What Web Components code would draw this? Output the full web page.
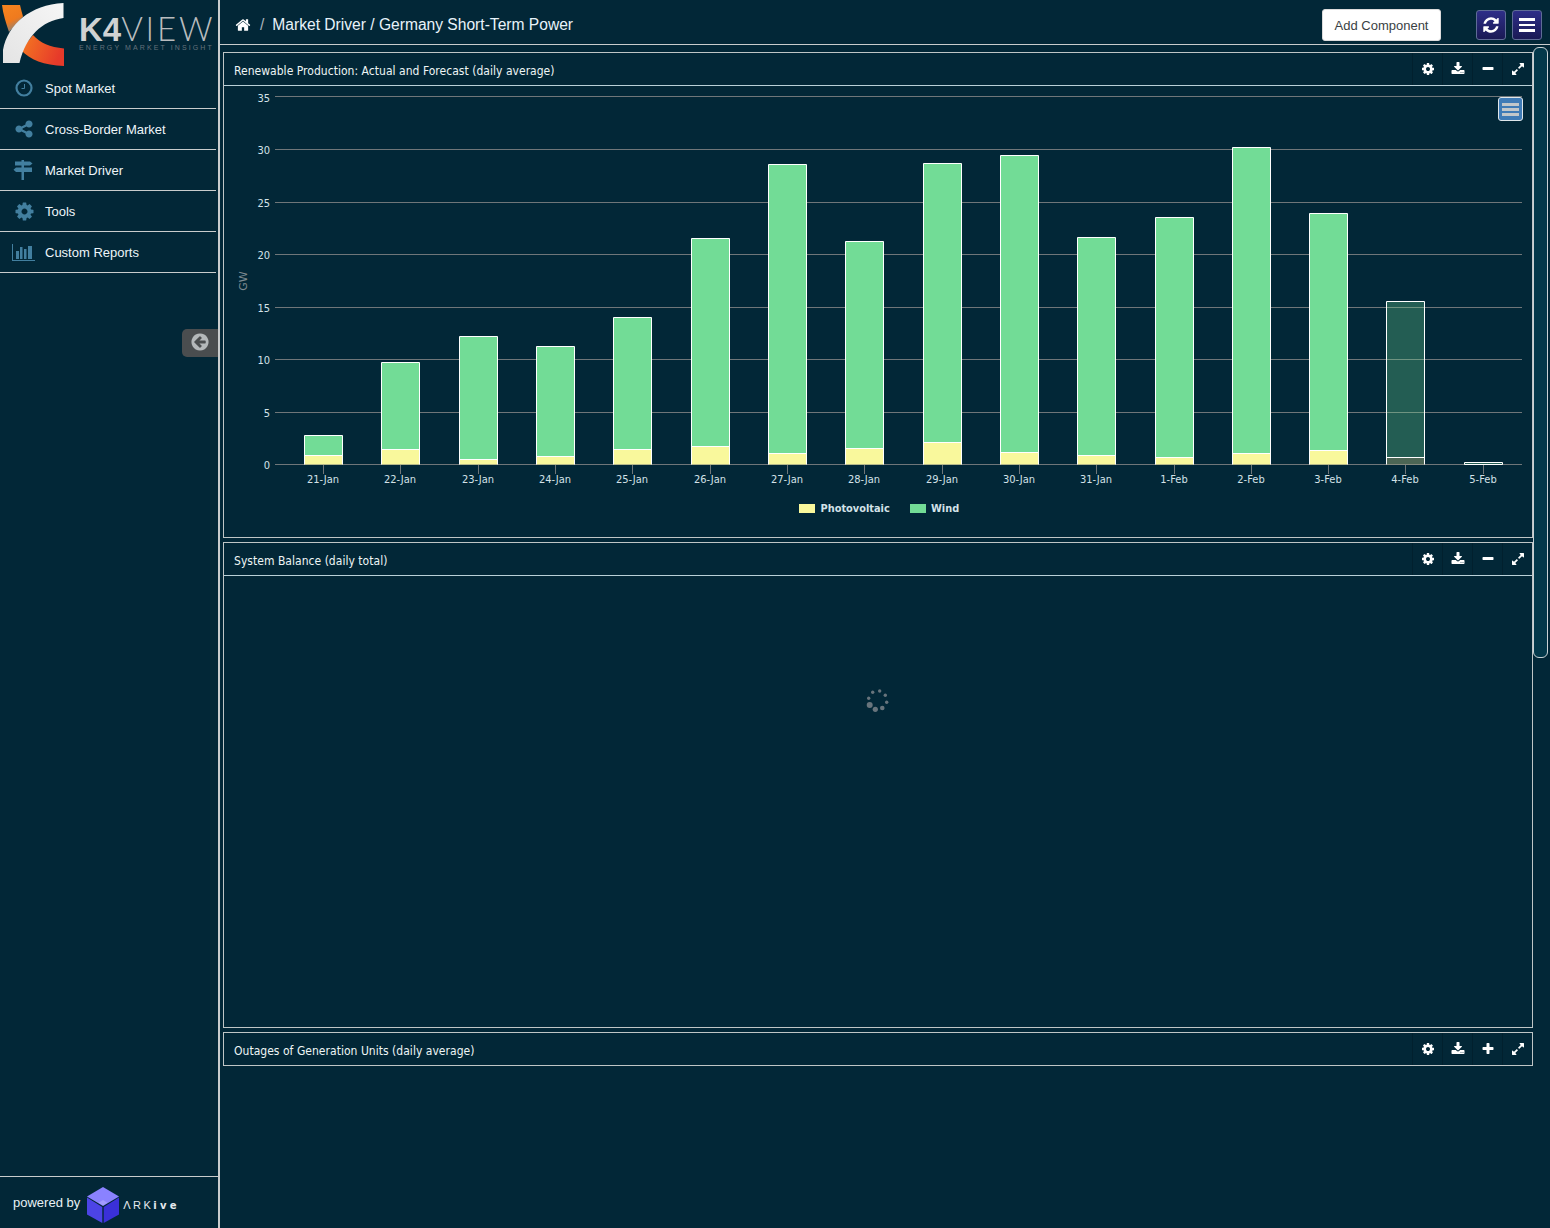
<!DOCTYPE html>
<html>
<head>
<meta charset="utf-8">
<title>K4View</title>
<style>
  html, body { margin: 0; height: 100%; background: #022737; overflow: hidden; }
  body {
    display: flex;
    height: 1228px;
    font-family: "Liberation Sans", Arial, sans-serif;
    color: #fff;
  }
</style>
</head>
<body>
<k4-sidebar>
  <k4-nav-item icon="clock">Spot Market</k4-nav-item>
  <k4-nav-item icon="share">Cross-Border Market</k4-nav-item>
  <k4-nav-item icon="signs">Market Driver</k4-nav-item>
  <k4-nav-item icon="cog">Tools</k4-nav-item>
  <k4-nav-item icon="bars">Custom Reports</k4-nav-item>
</k4-sidebar>
<k4-main>
  <k4-topbar slot="top">Market Driver / Germany Short-Term Power</k4-topbar>
  <k4-panel title="Renewable Production: Actual and Forecast (daily average)"><k4-chart></k4-chart></k4-panel>
  <k4-panel title="System Balance (daily total)"><k4-spinner></k4-spinner></k4-panel>
  <k4-panel title="Outages of Generation Units (daily average)" collapsed></k4-panel>
</k4-main>

<script>
  const FA = {
    cog: 'M1152 896q0-106-75-181t-181-75-181 75-75 181 75 181 181 75 181-75 75-181zm512-109v222q0 12-8 23t-20 13l-185 28q-19 54-39 91 35 50 107 138 10 12 10 25t-9 23q-27 37-99 108t-94 71q-12 0-26-9l-138-108q-44 23-91 38-16 136-29 186-7 28-36 28h-222q-14 0-24.500-8.500t-11.500-21.500l-28-184q-49-16-90-37l-141 107q-10 9-25 9-14 0-25-11-126-114-165-168-7-10-7-23 0-12 8-23 15-21 51-66.500t54-70.500q-27-50-41-99l-183-27q-13-2-21-12.500t-8-23.500v-222q0-12 8-23t19-13l186-28q14-46 39-92-40-57-107-138-10-12-10-24 0-10 9-23 26-36 98.500-107.500t94.500-71.500q13 0 26 10l138 107q44-23 91-38 16-136 29-186 7-28 36-28h222q14 0 24.500 8.500t11.500 21.500l28 184q49 16 90 37l142-107q9-9 24-9 13 0 25 10 129 119 165 170 7 8 7 22 0 12-8 23-15 21-51 66.500t-54 70.500q26 50 41 98l183 28q13 2 21 12.500t8 23.500z',
    home: 'M1472 992v480q0 26-19 45t-45 19h-384v-384h-256v384h-384q-26 0-45-19t-19-45v-480q0-1 .5-3t.5-3l575-474 575 474q1 2 1 6zm223-69l-62 74q-8 9-21 11h-3q-13 0-21-7l-692-577-692 577q-12 8-24 7-13-2-21-11l-62-74q-8-10-7-23.500t11-21.500l719-599q32-26 76-26t76 26l244 204v-195q0-14 9-23t23-9h192q14 0 23 9t9 23v408l219 182q10 8 11 21.500t-7 23.500z',
    refresh: 'M1639 1056q0 5-1 7-64 268-268 434.500t-478 166.500q-146 0-282.500-55t-243.500-157l-129 129q-19 19-45 19t-45-19-19-45v-448q0-26 19-45t45-19h448q26 0 45 19t19 45-19 45l-137 137q71 66 161 102t187 36q134 0 250-65t186-179q11-17 53-117 8-23 30-23h192q13 0 22.500 9.500t9.500 22.500zm25-800v448q0 26-19 45t-45 19h-448q-26 0-45-19t-19-45 19-45l138-138q-148-137-349-137-134 0-250 65t-186 179q-11 17-53 117-8 23-30 23h-199q-13 0-22.500-9.500t-9.500-22.500v-7q65-268 270-434.500t480-166.500q146 0 284 55.500t245 156.500l130-129q19-19 45-19t45 19 19 45z',
    download: 'M1344 1344q0-26-19-45t-45-19-45 19-19 45 19 45 45 19 45-19 19-45zm256 0q0-26-19-45t-45-19-45 19-19 45 19 45 45 19 45-19 19-45zm128-224v320q0 40-28 68t-68 28h-1472q-40 0-68-28t-28-68v-320q0-40 28-68t68-28h465l135 136q58 56 136 56t136-56l136-136h464q40 0 68 28t28 68zm-325-569q17 41-14 70l-448 448q-18 19-45 19t-45-19l-448-448q-31-29-14-70 17-39 59-39h256v-448q0-26 19-45t45-19h256q26 0 45 19t19 45v448h256q42 0 59 39z',
    expand: 'M883 1056q0 13-10 23l-332 332 144 144q19 19 19 45t-19 45-45 19h-448q-26 0-45-19t-19-45v-448q0-26 19-45t45-19 45 19l144 144 332-332q10-10 23-10t23 10l114 114q10 10 10 23zm781-864v448q0 26-19 45t-45 19-45-19l-144-144-332 332q-10 10-23 10t-23-10l-114-114q-10-10-10-23t10-23l332-332-144-144q-19-19-19-45t19-45 45-19h448q26 0 45 19t19 45z',
    share: 'M1344 1024q133 0 226.500 93.500t93.500 226.500-93.500 226.500-226.500 93.500-226.500-93.500-93.500-226.500q0-12 2-34l-360-180q-92 86-218 86-133 0-226.500-93.500t-93.500-226.500 93.500-226.500 226.500-93.500q126 0 218 86l360-180q-2-22-2-34 0-133 93.500-226.500t226.500-93.500 226.500 93.500 93.500 226.500-93.500 226.500-226.500 93.500q-126 0-218-86l-360 180q2 22 2 34t-2 34l360 180q92-86 218-86z',
    back: 'M1408 960v-128q0-26-19-45t-45-19h-502l189-189q19-19 19-45t-19-45l-91-91q-18-18-45-18t-45 18l-362 362-91 91q-18 18-18 45t18 45l91 91 362 362q18 18 45 18t45-18l91-91q18-18 18-45t-18-45l-189-189h502q26 0 45-19t19-45zm256-64q0 209-103 385.500t-279.500 279.500-385.500 103-385.500-103-279.500-279.500-103-385.500 103-385.500 279.500-279.500 385.500-103 385.500 103 279.500 279.500 103 385.500z',
    plus: 'M1600 736v192q0 40-28 68t-68 28h-416v416q0 40-28 68t-68 28h-192q-40 0-68-28t-28-68v-416h-416q-40 0-68-28t-28-68v-192q0-40 28-68t68-28h416v-416q0-40 28-68t68-28h192q40 0 68 28t28 68v416h416q40 0 68 28t28 68z',
    minus: 'M1600 736v192q0 40-28 68t-68 28h-1216q-40 0-68-28t-28-68v-192q0-40 28-68t68-28h1216q40 0 68 28t28 68z'
  };
  const fa = (name, size, color) =>
    `<svg width="${size}" height="${size}" viewBox="0 0 1792 1792" style="display:block"><path fill="${color}" d="${FA[name]}"/></svg>`;

  const NAV_ICONS = {
    clock: `<svg width="18" height="18" viewBox="0 0 18 18" style="display:block"><circle cx="9" cy="9" r="7.500" fill="none" stroke="#427f9f" stroke-width="2.200"/><path d="M9.500 5v4.500H6.500" fill="none" stroke="#427f9f" stroke-width="1"/></svg>`,
    share: `<svg width="20" height="20" viewBox="0 0 1792 1792" style="display:block"><path fill="#427f9f" d="${FA.share}"/></svg>`,
    signs: `<svg width="20" height="20" viewBox="0 0 20 20" style="display:block;margin-left:-2px"><g fill="#427f9f"><rect x="8.500" y="0" width="2.500" height="20"/><path d="M2 1.500h15l2.500 2-2.500 2H2z"/><path d="M3 7.500h16v4.500H3L.5 9.700z"/></g></svg>`,
    cog: `<svg width="21" height="21" viewBox="0 0 1792 1792" style="display:block"><path fill="#427f9f" d="${FA.cog}"/></svg>`,
    bars: `<svg width="23" height="17" viewBox="0 0 23 17" style="display:block;margin-left:-2px"><path fill="#427f9f" d="M0 0h1v16h22v1H0z"/><path fill="#427f9f" d="M4 7h3v8H4zM8 3h2.500v12H8zM12 5h2.500v10H12zM16 2h4v13h-4z"/></svg>`
  };

  const sidebarTemplate = document.createElement('template');
  sidebarTemplate.innerHTML = `
    <style>
      :host {
        display: flex;
        flex-direction: column;
        position: relative;
        flex: none;
        width: 218px;
        border-right: 2px solid #c9cccd;
        box-sizing: content-box;
      }
      .logo {
        display: flex;
        height: 68px;
      }
      .mark { display: block; margin: 0; }
      .word {
        margin-left: 13px;
        padding-top: 13px;
        color: #d0d2d3;
      }
      .name {
        font-size: 33px;
        line-height: 30px;
        white-space: nowrap;
      }
      .name b { font-family: "Liberation Sans", sans-serif; font-weight: 700; letter-spacing: 0; }
      .name span { font-family: Lato, sans-serif; font-weight: 300; color: #b9bcbe; letter-spacing: 2.800px; }
      .tag {
        font-family: "Liberation Sans", sans-serif;
        font-size: 7px;
        line-height: 6px;
        letter-spacing: 2.100px;
        color: #64727b;
        white-space: nowrap;
      }
      nav { display: flex; flex-direction: column; }
      .footer {
        margin-top: auto;
        border-top: 1px solid #c9cccd;
        height: 51px;
        display: flex;
        align-items: center;
        padding-left: 13px;
        font-size: 13px;
        color: #e8f1f5;
      }
      .footer .by { margin-top: -1px; }
      .cube { margin-left: 7px; margin-top: 5px; display: block; }
      .ark {
        margin-left: 4px;
        font-size: 11px;
        letter-spacing: 2.500px;
        color: #e6e9ee;
        margin-top: 4px;
      }
      .ark i { font-style: normal; font-weight: 700; font-size: 10px; letter-spacing: 3.200px; font-family: "DejaVu Sans", sans-serif; }
      .collapse {
        position: absolute;
        right: 0;
        top: 329px;
        width: 36px;
        height: 28px;
        padding-bottom: 2px;
        box-sizing: border-box;
        background: #4a4d4f;
        border-radius: 5px 0 0 5px;
        display: flex;
        align-items: center;
        justify-content: center;
      }
    </style>
    <div class="logo">
      <svg class="mark" width="66" height="68" viewBox="0 0 66 68">
        <defs>
          <linearGradient id="o1" x1="0" y1="0" x2="0.4" y2="1"><stop offset="0" stop-color="#f6851f"/><stop offset=".65" stop-color="#ef7a1e"/><stop offset="1" stop-color="#8d8378"/></linearGradient>
          <linearGradient id="o2" x1="0" y1="0" x2="1" y2="0.3"><stop offset="0" stop-color="#f47a20"/><stop offset=".5" stop-color="#ee5a26"/><stop offset="1" stop-color="#e63a2a"/></linearGradient>
          <linearGradient id="w1" x1="0" y1="1" x2="1" y2="0"><stop offset="0" stop-color="#e4e4e4"/><stop offset="1" stop-color="#f6f6f6"/></linearGradient>
        </defs>
        <path fill="url(#o1)" d="M2 5h18c1 4 2 8 3 11.500L9 32C6 23 3 14 2 5z"/>
        <path fill="url(#o2)" d="M33 35c7 8 17 12 31 13.500V66C44 65 30 60 21 50z"/>
        <path fill="url(#w1)" d="M63.500 3v15C42 21 26 36 19.500 63H3V50C8 24 30 5 63.500 3z"/>
      </svg>
      <div class="word">
        <div class="name"><b>K4</b><span>VIEW</span></div>
        <div class="tag">ENERGY MARKET INSIGHT</div>
      </div>
    </div>
    <nav><slot></slot></nav>
    <div class="footer">
      <span class="by">powered by</span>
      <svg class="cube" width="32" height="36" viewBox="0 0 32 36">
        <path fill="#8a82ff" d="M16 0l16 9.500L16 19 0 9.500z"/>
        <path fill="#4c44e6" d="M0 10.500L15.300 20v16L0 27.500z"/>
        <path fill="#3a30d8" d="M32 10.500L16.700 20v16L32 27.500z"/>
        <path fill="#b0acff" opacity=".6" d="M16 13l4.500 2.700L16 18.500l-4.500-2.800z"/>
      </svg>
      <span class="ark">ΛRK<i>ive</i></span>
    </div>
    <div class="collapse">${fa('back', 20, '#b4b8ba')}</div>
  `;
  class K4Sidebar extends HTMLElement {
    constructor() {
      super();
      this.attachShadow({ mode: 'open' });
      this.shadowRoot.appendChild(sidebarTemplate.content.cloneNode(true));
    }
  }
  customElements.define('k4-sidebar', K4Sidebar);

  const navTemplate = document.createElement('template');
  navTemplate.innerHTML = `
    <style>
      :host {
        display: flex;
        align-items: center;
        height: 40px;
        width: 216px;
        border-bottom: 1px solid #c9cccd;
        font-size: 13px;
        color: #eef5f9;
        box-sizing: content-box;
      }
      .icon {
        width: 45px;
        flex: none;
        display: flex;
        justify-content: center;
        padding-left: 3px;
        box-sizing: border-box;
      }
    </style>
    <div class="icon" id="icon"></div>
    <slot></slot>
  `;
  class K4NavItem extends HTMLElement {
    constructor() {
      super();
      this.attachShadow({ mode: 'open' });
      this.shadowRoot.appendChild(navTemplate.content.cloneNode(true));
    }
    connectedCallback() {
      this.shadowRoot.querySelector('#icon').innerHTML = NAV_ICONS[this.getAttribute('icon')] || '';
    }
  }
  customElements.define('k4-nav-item', K4NavItem);

  const mainTemplate = document.createElement('template');
  mainTemplate.innerHTML = `
    <style>
      :host {
        display: flex;
        flex-direction: column;
        position: relative;
        flex: 1;
        min-width: 0;
      }
      .panels {
        display: flex;
        flex-direction: column;
        gap: 4px;
        padding: 7px 0 0 3px;
        width: 1310px;
      }
      .scroll {
        position: absolute;
        left: 1313px;
        top: 47px;
        width: 15px;
        height: 611px;
        box-sizing: border-box;
        border: 1px solid #c9d2d5;
        border-radius: 6px;
        background: #03384a;
      }
    </style>
    <slot name="top"></slot>
    <div class="panels"><slot></slot></div>
    <div class="scroll"></div>
  `;
  class K4Main extends HTMLElement {
    constructor() {
      super();
      this.attachShadow({ mode: 'open' });
      this.shadowRoot.appendChild(mainTemplate.content.cloneNode(true));
    }
  }
  customElements.define('k4-main', K4Main);

  const topbarTemplate = document.createElement('template');
  topbarTemplate.innerHTML = `
    <style>
      :host {
        display: flex;
        align-items: center;
        height: 44px;
        border-bottom: 1px solid #c9cccd;
        padding-left: 15px;
        padding-right: 8px;
        font-size: 15.600px;
        color: #e8f3fa;
        box-sizing: content-box;
      }
      .crumb { display: flex; align-items: center; margin-top: 5px; }
      .sep { margin: 0 8px 0 9px; color: #a8b4bb; }
      .add {
        margin-left: auto;
        width: 119px;
        height: 32px;
        box-sizing: border-box;
        background: #fff;
        border: 1px solid #dcdcdc;
        border-radius: 3px;
        color: #3a3f44;
        font: 13px "Liberation Sans", Arial, sans-serif;
        padding: 0;
        margin-top: 6px;
        margin-bottom: 0;
      }
      .sq {
        width: 30px;
        height: 30px;
        box-sizing: border-box;
        border: 1px solid #5f6c96;
        border-radius: 3px;
        background: linear-gradient(#2e2e88, #1a1a55);
        display: flex;
        align-items: center;
        justify-content: center;
        margin-top: 6px;
      }
      .sq.first { margin-left: 35px; }
      .sq.last { margin-left: 6px; }
      .burger { display: flex; flex-direction: column; gap: 3px; }
      .burger i { display: block; width: 16px; height: 2.500px; background: #fff; }
    </style>
    <div class="crumb">
      ${fa('home', 16, '#fff')}
      <span class="sep">/</span>
      <slot></slot>
    </div>
    <button class="add">Add Component</button>
    <div class="sq first">${fa('refresh', 18, '#fff')}</div>
    <div class="sq last"><div class="burger"><i></i><i></i><i></i></div></div>
  `;
  class K4Topbar extends HTMLElement {
    constructor() {
      super();
      this.attachShadow({ mode: 'open' });
      this.shadowRoot.appendChild(topbarTemplate.content.cloneNode(true));
    }
  }
  customElements.define('k4-topbar', K4Topbar);

  const panelTemplate = document.createElement('template');
  panelTemplate.innerHTML = `
    <style>
      :host {
        display: block;
        height: 486px;
        box-sizing: border-box;
        border: 1px solid #bfc5c6;
        position: relative;
      }
      :host([collapsed]) { height: 34px; }
      .head {
        display: flex;
        align-items: center;
        height: 33px;
        box-sizing: border-box;
        border-bottom: 1px solid #b9d0d8;
        padding-left: 10px;
      }
      :host([collapsed]) .head { border-bottom: 0; height: 32px; }
      .title {
        font-family: "DejaVu Sans Condensed", "DejaVu Sans", Verdana, sans-serif;
        font-stretch: condensed;
        font-size: 12px;
        letter-spacing: .03px;
        color: #eef5f5;
        white-space: nowrap;
        margin-top: 4px;
      }
      .tools { margin-left: auto; display: flex; height: 100%; margin-right: 0; }
      .tools div {
        width: 30px;
        display: flex;
        align-items: center;
        justify-content: center;
        border-left: 1px solid #01202e;
        box-sizing: border-box;
      }
    </style>
    <div class="head">
      <span class="title" id="title"></span>
      <div class="tools" id="tools"></div>
    </div>
    <slot></slot>
  `;
  class K4Panel extends HTMLElement {
    constructor() {
      super();
      this.attachShadow({ mode: 'open' });
      this.shadowRoot.appendChild(panelTemplate.content.cloneNode(true));
    }
    connectedCallback() {
      this.shadowRoot.querySelector('#title').textContent = this.getAttribute('title');
      this.removeAttribute('title');
      const toggle = this.hasAttribute('collapsed') ? 'plus' : 'minus';
      this.shadowRoot.querySelector('#tools').innerHTML =
        ['cog', 'download', toggle, 'expand'].map(n => `<div>${fa(n, 14, '#fff')}</div>`).join('');
    }
  }
  customElements.define('k4-panel', K4Panel);

  // day, centre x, top of the wind bar, top of the photovoltaic bar
  const SERIES = [
    ['21-Jan', 323, 435, 455], ['22-Jan', 400, 362, 449], ['23-Jan', 478, 336, 459], ['24-Jan', 555, 346, 456],
    ['25-Jan', 632, 317, 449], ['26-Jan', 710, 238, 446], ['27-Jan', 787, 164, 453], ['28-Jan', 864, 241, 448],
    ['29-Jan', 942, 163, 442], ['30-Jan', 1019, 155, 452], ['31-Jan', 1096, 237, 455], ['1-Feb', 1174, 217, 457],
    ['2-Feb', 1251, 147, 453], ['3-Feb', 1328, 213, 450], ['4-Feb', 1405, 301, 457], ['5-Feb', 1483, 462, 464]
  ];
  const GRID_Y = [464, 412, 359, 307, 254, 202, 149, 96];

  class K4Chart extends HTMLElement {
    constructor() {
      super();
      this.attachShadow({ mode: 'open' });
    }
    connectedCallback() {
      let grid = '', bars = '', ticks = '';
      GRID_Y.forEach((py, i) => {
        const y = py + .5;
        grid += `<line x1="275" x2="1522" y1="${y}" y2="${y}" stroke="#6f7679"/>`;
        grid += `<text x="270" y="${Math.round(469 - i * 52.43)}" text-anchor="end" class="lab">${i * 5}</text>`;
      });
      SERIES.forEach(([day, cx, top, split], i) => {
        const faded = i >= 14 ? ' opacity=".3"' : '';
        const x = cx - 18.500;
        ticks += `<line x1="${cx + .5}" x2="${cx + .5}" y1="465" y2="474" stroke="#6f7679"/>`;
        ticks += `<text x="${cx}" y="483" text-anchor="middle" class="lab">${day}</text>`;
        bars += `<rect x="${x}" y="${top + .5}" width="38" height="${split - top}" fill="#72dc96"${faded}/>`;
        bars += `<rect x="${x}" y="${split + .5}" width="38" height="${464 - split}" fill="#f9f89c"${faded}/>`;
        bars += `<path d="M${x} 464.500V${top + .5}H${x + 38}V464.500M${x} ${split + .5}H${x + 38}" fill="none" stroke="#fff"/>`;
      });
      this.shadowRoot.innerHTML = `
        <style>
          :host { display: block; position: relative; height: 451px; }
          svg { display: block; }
          .lab { font-family: "DejaVu Sans Condensed", "DejaVu Sans", Verdana, sans-serif; font-stretch: condensed; font-size: 11px; fill: #d3e2e8; }
          .leg { font: bold 9.800px "DejaVu Sans", Verdana, sans-serif; fill: #d3e2e8; }
          .gw { font: 11px "DejaVu Sans", Verdana, sans-serif; fill: #7d8a90; }
          .menu {
            position: absolute;
            right: 9px;
            top: 11px;
            width: 25px;
            height: 24px;
            box-sizing: border-box;
            background: #3f7bb6;
            border: 1px solid #dfe6ea;
            border-radius: 3px;
            display: flex;
            flex-direction: column;
            justify-content: center;
            align-items: center;
            gap: 2px;
          }
          .menu i { display: block; width: 17px; height: 3px; background: #c2c7ca; }
        </style>
        <svg width="1308" height="451" viewBox="224 86 1308 451">
          ${grid}${ticks}${bars}
          <text transform="translate(247 281) rotate(-90)" text-anchor="middle" class="gw">GW</text>
          <rect x="799" y="504" width="16" height="9" fill="#f9f89c"/>
          <text x="820.500" y="512" class="leg">Photovoltaic</text>
          <rect x="910" y="504" width="16" height="9" fill="#72dc96"/>
          <text x="931" y="512" class="leg">Wind</text>
        </svg>
        <div class="menu"><i></i><i></i><i></i></div>
      `;
    }
  }
  customElements.define('k4-chart', K4Chart);

  class K4Spinner extends HTMLElement {
    constructor() {
      super();
      this.attachShadow({ mode: 'open' });
      this.shadowRoot.innerHTML = `
        <style>
          :host { display: flex; justify-content: center; }
          svg { display: block; margin: 111px 0 0 -2px; }
        </style>
        <svg width="26" height="26" viewBox="0 0 26 26">
          <g fill="#68747c">
            <circle cx="8.700" cy="5.300" r="1.700"/><circle cx="15.700" cy="4" r="1.700"/>
            <circle cx="21.300" cy="8.300" r="1.700"/><circle cx="22.700" cy="15.300" r="1.700"/>
            <circle cx="18.300" cy="21" r="2.300"/><circle cx="11.300" cy="22.300" r="2.600"/>
            <circle cx="5.700" cy="18" r="3"/><circle cx="4.700" cy="11.300" r="1.700"/>
          </g>
        </svg>
      `;
    }
  }
  customElements.define('k4-spinner', K4Spinner);
</script>
</body>
</html>
